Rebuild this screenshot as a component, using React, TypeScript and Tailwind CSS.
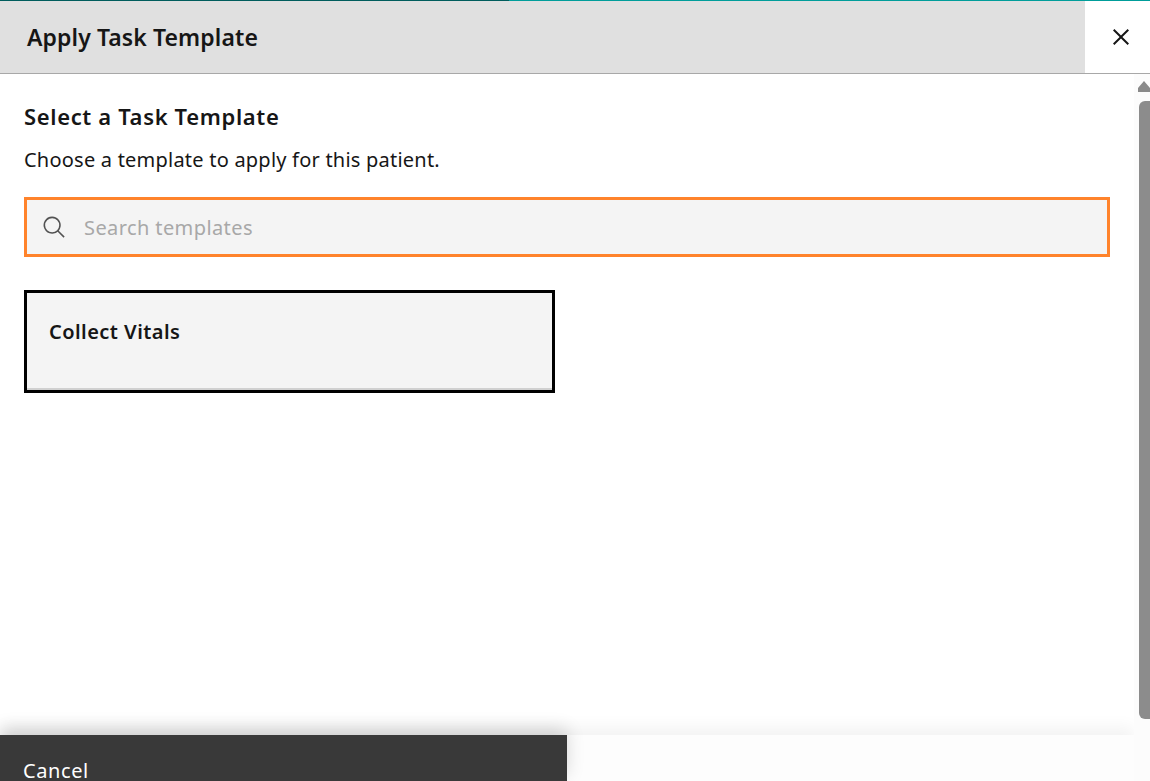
const font = "font-['Noto_Sans','Open_Sans',sans-serif]";

function SearchIcon() {
  return (
    <svg className="h-[25px] w-[25px] shrink-0" viewBox="0 0 32 32" fill="#525252">
      <path d="m29 27.586-7.552-7.552a11.018 11.018 0 1 0-1.414 1.414L27.586 29ZM4 13a9 9 0 1 1 9 9 9.01 9.01 0 0 1-9-9Z" />
    </svg>
  );
}

function CloseIcon() {
  return (
    <svg className="h-8 w-8" viewBox="0 0 32 32" fill="#161616">
      <path d="M17.4141 16 24 9.4141 22.5859 8 16 14.5859 9.4143 8 8 9.4141 14.5859 16 8 22.5859 9.4143 24 16 17.4141 22.5859 24 24 22.5859 17.4141 16z" />
    </svg>
  );
}

export default function App() {
  return (
    <div className={`flex h-[781px] w-[1150px] flex-col overflow-hidden bg-white text-[#161616] ${font}`}>
      {/* progress line */}
      <div className="flex h-px shrink-0">
        <div className="w-[509px] bg-[#005d5d]" />
        <div className="flex-1 bg-[#009d9a]" />
      </div>

      <header className="flex h-[73px] shrink-0 border-b border-[#a8a8a8]">
        <div className="flex flex-1 items-center bg-[#e0e0e0] pl-[27px]">
          <h1 className="text-[23px] font-semibold leading-7 tracking-[0.1px]">Apply Task Template</h1>
        </div>
        <button className="flex w-[65px] items-center justify-center bg-white pl-[6px]">
          <CloseIcon />
        </button>
      </header>

      <div className="flex min-h-0 flex-1">
        <div className="flex min-w-0 flex-1 flex-col">
          <main className="flex-1 pl-6 pr-6 pt-[28px]">
            <h2 className="text-[22px] font-semibold leading-7 tracking-[0.65px]">Select a Task Template</h2>
            <p className="mt-[17px] text-[20px] leading-[26px] tracking-[0.22px]">Choose a template to apply for this patient.</p>
            <div className="mt-[24px] flex h-[60px] items-center border-[3px] border-[#ff832b] bg-[#f4f4f4] pl-[15px]">
              <SearchIcon />
              <input
                placeholder="Search templates"
                className="ml-[17px] flex-1 bg-transparent pt-[2px] text-[20px] tracking-[0.4px] outline-none placeholder:text-[#a8a8a8]"
              />
            </div>
            <div className="mt-[33px] h-[103px] w-[531px] border-[3px] border-black bg-[#f4f4f4] pl-[22px] pt-[25px] shadow-[inset_0_-2px_0_#d0d0d0]">
              <h3 className="text-[20px] font-semibold leading-7 tracking-[0.45px]">Collect Vitals</h3>
            </div>
          </main>

          <footer className="relative flex h-[46px] shrink-0 bg-[#fdfdfd] shadow-[0_-8px_16px_rgba(0,0,0,0.05)]">
            <button className="h-[46px] w-[567px] bg-[#393939] pl-[23px] pt-[14px] text-left text-[20px] leading-[44px] tracking-[0.6px] text-white shadow-[0_-6px_18px_rgba(0,0,0,0.16)]">
              Cancel
            </button>
          </footer>
        </div>

        {/* scrollbar */}
        <div className="z-10 flex w-4 shrink-0 flex-col items-end bg-[#fcfcfc]">
          <svg className="mt-[7px] h-[11px] w-3" viewBox="0 0 12 11">
            <path d="M6 0 L12 7 V11 H0 V7 Z" fill="#8a8a8a" />
          </svg>
          <div className="mt-[9px] h-[618px] w-[11px] rounded-tl-[6px] rounded-bl-[6px] bg-[#8c8c8c]" />
        </div>
      </div>
    </div>
  );
}
